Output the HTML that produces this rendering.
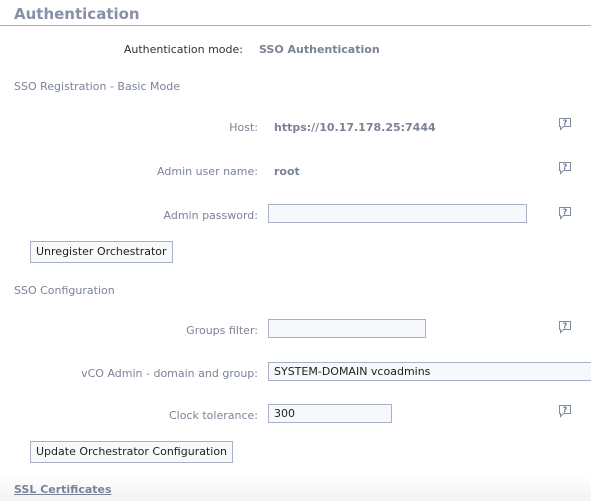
<!DOCTYPE html>
<html><head><meta charset="utf-8"><style>
body{margin:0;width:591px;height:501px;background:#fff;font-family:"DejaVu Sans",Verdana,sans-serif;font-size:11px;color:#7a8396;position:relative;overflow:hidden}
.a{position:absolute;white-space:nowrap}
.lbl{position:absolute;right:333px;white-space:nowrap}
.v{position:absolute;left:274px;font-weight:bold;color:#7a8396}
.in{position:absolute;left:268px;height:19px;border:1px solid #a7b0c4;background:#f6f8fc;box-sizing:border-box;color:#222;padding-left:5px;line-height:17px}
.btn{position:absolute;left:30px;height:22px;border:1px solid #a7b0c4;background:#f8f9fb;box-sizing:border-box;color:#222;padding:0 5px;line-height:20px}
.h{position:absolute;left:557px;width:16px;height:16px}
</style></head><body>
<div class="a" style="left:14px;top:5px;font-size:15px;font-weight:bold;color:#8890a8">Authentication</div>
<div class="a" style="left:0;top:25px;width:591px;height:1px;background:#a9afbd"></div>
<div class="lbl" style="right:348px;top:43px;color:#333">Authentication mode:</div>
<div class="a" style="left:259px;top:43px;font-weight:bold;color:#7a8396">SSO Authentication</div>
<div class="a" style="left:14px;top:80px">SSO Registration - Basic Mode</div>
<div class="lbl" style="top:121px">Host:</div>
<div class="v" style="top:121px">https://10.17.178.25:7444</div>
<div class="lbl" style="top:165px">Admin user name:</div>
<div class="v" style="top:165px">root</div>
<div class="lbl" style="top:209px">Admin password:</div>
<div class="in" style="top:204px;width:259px"></div>
<div class="btn" style="top:241px">Unregister Orchestrator</div>
<div class="a" style="left:14px;top:284px">SSO Configuration</div>
<div class="lbl" style="top:324px">Groups filter:</div>
<div class="in" style="top:319px;width:158px"></div>
<div class="lbl" style="top:367px">vCO Admin - domain and group:</div>
<div class="in" style="top:362px;width:330px">SYSTEM-DOMAIN vcoadmins</div>
<div class="lbl" style="top:409px">Clock tolerance:</div>
<div class="in" style="top:404px;width:124px">300</div>
<div class="btn" style="top:441px">Update Orchestrator Configuration</div>
<div class="a" style="left:0;top:475px;width:591px;height:26px;background:linear-gradient(#fff,#f3f3f3)"></div>
<div class="a" style="left:14px;top:483px;font-weight:bold;text-decoration:underline;color:#7a8396">SSL Certificates</div>
<svg class="h" style="top:116px" viewBox="0 0 16 16"><path d="M2.5 2.5h11v8h-7l-3 3v-3h-1z" fill="#fff" stroke="#8a8a8a"/><text x="8" y="9.5" font-size="8" font-weight="bold" text-anchor="middle" fill="#4a78c0" font-family="DejaVu Sans">?</text></svg>
<svg class="h" style="top:160px" viewBox="0 0 16 16"><path d="M2.5 2.5h11v8h-7l-3 3v-3h-1z" fill="#fff" stroke="#8a8a8a"/><text x="8" y="9.5" font-size="8" font-weight="bold" text-anchor="middle" fill="#4a78c0" font-family="DejaVu Sans">?</text></svg>
<svg class="h" style="top:205px" viewBox="0 0 16 16"><path d="M2.5 2.5h11v8h-7l-3 3v-3h-1z" fill="#fff" stroke="#8a8a8a"/><text x="8" y="9.5" font-size="8" font-weight="bold" text-anchor="middle" fill="#4a78c0" font-family="DejaVu Sans">?</text></svg>
<svg class="h" style="top:319px" viewBox="0 0 16 16"><path d="M2.5 2.5h11v8h-7l-3 3v-3h-1z" fill="#fff" stroke="#8a8a8a"/><text x="8" y="9.5" font-size="8" font-weight="bold" text-anchor="middle" fill="#4a78c0" font-family="DejaVu Sans">?</text></svg>
<svg class="h" style="top:403px" viewBox="0 0 16 16"><path d="M2.5 2.5h11v8h-7l-3 3v-3h-1z" fill="#fff" stroke="#8a8a8a"/><text x="8" y="9.5" font-size="8" font-weight="bold" text-anchor="middle" fill="#4a78c0" font-family="DejaVu Sans">?</text></svg>
</body></html>
